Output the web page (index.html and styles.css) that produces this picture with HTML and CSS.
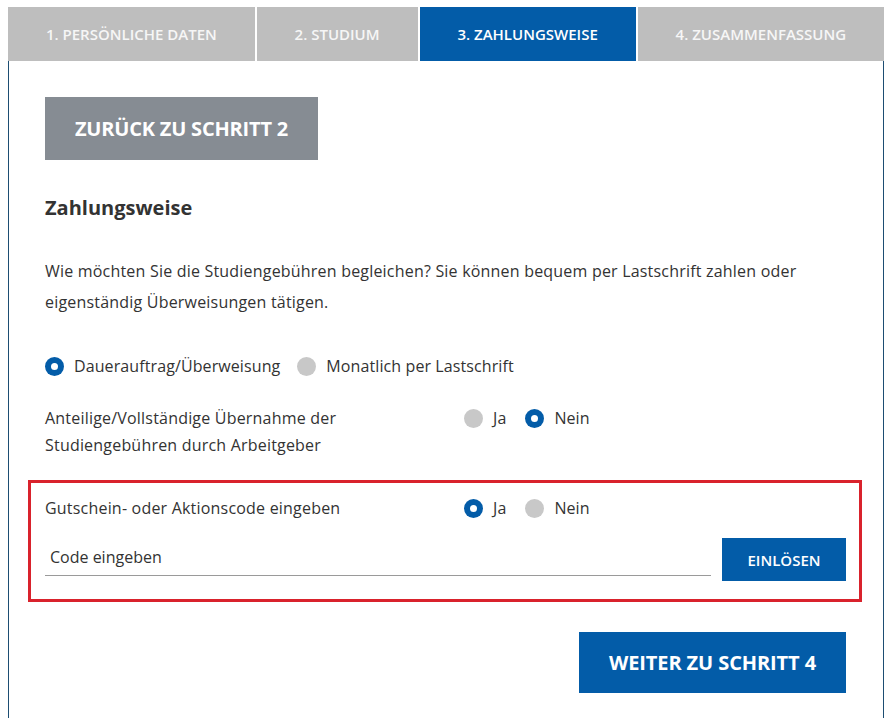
FILE: index.html
```html
<!DOCTYPE html>
<html lang="de">
<head>
<meta charset="utf-8">
<title>Zahlungsweise</title>
<link rel="stylesheet" href="styles.css">
</head>
<body>
<div class="wizard">
  <nav class="tabs">
    <div class="tab">1. PERSÖNLICHE DATEN</div>
    <div class="tab">2. STUDIUM</div>
    <div class="tab tab-active">3. ZAHLUNGSWEISE</div>
    <div class="tab">4. ZUSAMMENFASSUNG</div>
  </nav>
  <div class="frame">
    <div class="back-row"><button class="btn btn-grey">ZURÜCK ZU SCHRITT 2</button></div>
    <h2 class="title">Zahlungsweise</h2>
    <p class="intro">Wie möchten Sie die Studiengebühren begleichen? Sie können bequem per Lastschrift zahlen oder eigenständig Überweisungen tätigen.</p>
    <div class="radio-row">
      <label class="radio"><span class="dot dot-on"></span>Dauerauftrag/Überweisung</label>
      <label class="radio"><span class="dot"></span>Monatlich per Lastschrift</label>
    </div>
    <div class="question">
      <div class="q-label">Anteilige/Vollständige Übernahme der Studiengebühren durch Arbeitgeber</div>
      <div class="q-options">
        <label class="radio"><span class="dot"></span>Ja</label>
        <label class="radio"><span class="dot dot-on"></span>Nein</label>
      </div>
    </div>
    <div class="voucher">
      <div class="question question-tight">
        <div class="q-label">Gutschein- oder Aktionscode eingeben</div>
        <div class="q-options">
          <label class="radio"><span class="dot dot-on"></span>Ja</label>
          <label class="radio"><span class="dot"></span>Nein</label>
        </div>
      </div>
      <div class="code-row">
        <div class="code-input">Code eingeben</div>
        <button class="btn btn-blue btn-small">EINLÖSEN</button>
      </div>
    </div>
    <div class="next-row"><button class="btn btn-blue btn-big">WEITER ZU SCHRITT 4</button></div>
  </div>
</div>
</body>
</html>
```
FILE: styles.css
```css
* { box-sizing: border-box; }
html, body { margin: 0; padding: 0; background: #fff; }
body {
  font-family: "Open Sans", "Noto Sans", sans-serif;
  color: #333;
  width: 893px;
  height: 718px;
  overflow: hidden;
}
.wizard {
  margin: 7px 9px 0 8px;
}
.tabs {
  display: flex;
  gap: 2px;
  height: 54px;
}
.tab {
  flex: 1 1 auto;
  background: #bebebe;
  color: #f6f6f6;
  font-size: 15px;
  font-weight: 600;
  display: flex;
  align-items: center;
  justify-content: center;
  padding: 0 20px;
  white-space: nowrap;
}
.tab-active {
  background: #035ca8;
  color: #fff;
}
.frame {
  border-left: 1px solid #1d4d72;
  border-right: 1px solid #1d4d72;
  padding: 36px 37px 25px 36px;
}
.btn {
  border: 0;
  font-family: inherit;
  color: #fff;
  font-weight: 700;
  display: flex;
  align-items: center;
  justify-content: center;
  padding: 0;
  cursor: pointer;
}
.btn-grey {
  background: #868c93;
  width: 273px;
  height: 63px;
  font-size: 20px;
  letter-spacing: -0.2px;
}
.btn-blue { background: #035ca8; }
.btn-small {
  width: 124px;
  height: 43px;
  font-size: 15px;
  font-weight: 600;
  flex: 0 0 auto;
}
.btn-big {
  width: 267px;
  height: 61px;
  font-size: 20px;
  letter-spacing: -0.1px;
}
.title {
  margin: 36px 0 0;
  font-size: 20px;
  line-height: 24px;
  font-weight: 700;
  color: #333;
}
.intro {
  margin: 36px 0 0;
  font-size: 16px;
  line-height: 31px;
  letter-spacing: 0.2px;
}
.radio-row {
  margin-top: 36px;
  display: flex;
  gap: 17px;
  height: 24px;
}
.radio {
  display: flex;
  align-items: center;
  gap: 10px;
  font-size: 16px;
  line-height: 24px;
  letter-spacing: 0.1px;
}
.dot {
  width: 19px;
  height: 19px;
  border-radius: 50%;
  background: #c8c8c8;
  flex: 0 0 auto;
}
.dot-on {
  background: #035ca8;
  position: relative;
}
.dot-on::after {
  content: "";
  position: absolute;
  left: 6px;
  top: 6px;
  width: 7px;
  height: 7px;
  border-radius: 50%;
  background: #fff;
}
.question {
  margin-top: 27px;
  display: grid;
  grid-template-columns: 419px auto;
  align-items: start;
}
.q-label {
  font-size: 16px;
  line-height: 27px;
  letter-spacing: 0.2px;
  width: 320px;
}
.q-options {
  display: flex;
  gap: 19px;
  padding-top: 1px;
}
.voucher {
  margin: 21px -16px 0 -17px;
  border: 3px solid #d9222c;
  padding: 13px 13px 18px 14px;
}
.question-tight { margin-top: 0; }
.question-tight .q-label { line-height: 24px; width: auto; }
.question-tight .q-options { padding-top: 0; }
.code-row {
  margin-top: 18px;
  display: flex;
  align-items: stretch;
  gap: 11px;
}
.code-input {
  flex: 1 1 auto;
  border-bottom: 1px solid #9a9a9a;
  font-size: 16px;
  padding: 7px 5px 0;
  line-height: 24px;
  color: #333;
  height: 38px;
  align-self: flex-start;
}
.next-row {
  margin-top: 30px;
  display: flex;
  justify-content: flex-end;
}
```
